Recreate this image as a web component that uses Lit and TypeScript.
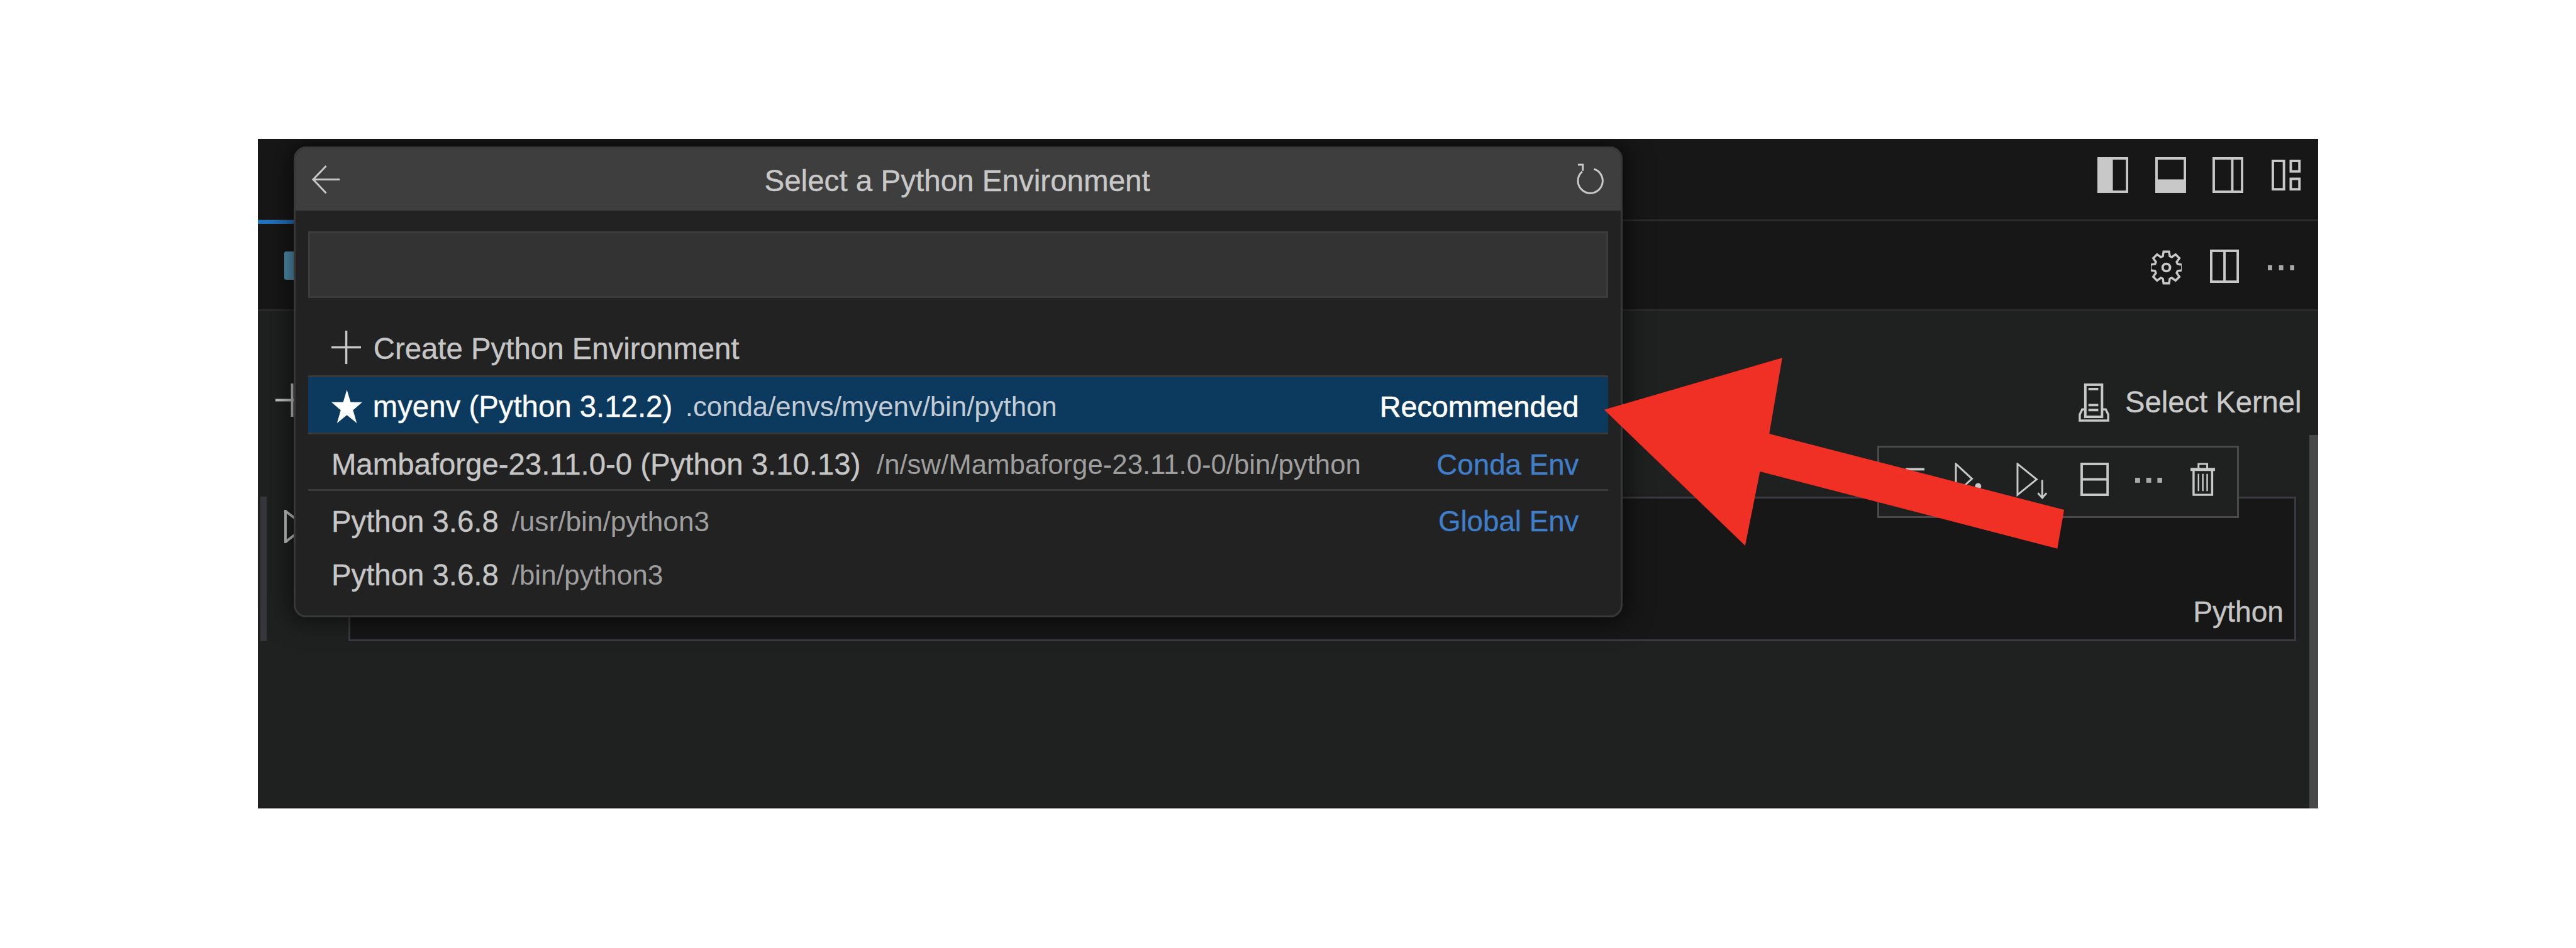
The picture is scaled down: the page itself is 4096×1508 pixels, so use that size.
import { LitElement, html, css, svg } from "lit";
import { customElement } from "lit/decorators.js";

const gearPath = (() => {
  const cx = 25, cy = 29, teeth = 8, ro = 26, ri = 19;
  const pts: string[] = [];
  for (let i = 0; i < teeth; i++) {
    const a = (i * 2 * Math.PI) / teeth - Math.PI / 2;
    const w = 0.17, v = 0.3;
    const p = (r: number, t: number) => `${(cx + r * Math.cos(t)).toFixed(1)} ${(cy + r * Math.sin(t)).toFixed(1)}`;
    pts.push(p(ri, a - v), p(ro, a - w), p(ro, a + w), p(ri, a + v));
  }
  return "M" + pts.join("L") + "Z";
})();

const ico = (w: number, h: number, body: unknown, cls = "") =>
  html`<svg class="ico ${cls}" width=${w} height=${h} viewBox="0 0 ${w} ${h}">${body}</svg>`;

@customElement("app-root")
export class AppRoot extends LitElement {
  static styles = css`
    :host { display: block; zoom: 0.98296; background: #fff; font-family: "Liberation Sans", Arial, sans-serif; }
    .page { position: relative; width: 4167px; height: 1534px; padding: 225px 417px 0; box-sizing: border-box; background: #fff; overflow: hidden; }
    .win { position: relative; width: 3333px; height: 1083px; display: flex; flex-direction: column; background: #1f2120; overflow: hidden; }
    .ico { display: block; flex: none; fill: none; stroke: #c8c8c8; stroke-width: 4; }
    .titlebar { height: 133px; border-bottom: 4px solid #2b2b2b; background: #171717; display: flex; justify-content: flex-end; align-items: flex-start; gap: 43px; padding: 29px 28px 0 0; box-sizing: border-box; flex: none; }
    .lay4 { margin-left: 3px; margin-top: 4px; }
    .tabbar { height: 146px; border-bottom: 4px solid #2b2b2b; background: #171717; display: flex; align-items: flex-start; flex: none; position: relative; padding: 46px 39px 0 0; box-sizing: border-box; }
    .tabline { position: absolute; left: 0; top: -2px; width: 200px; height: 6px; background: #1f74c4; }
    .tabicon { width: 40px; height: 46px; margin-left: 43px; margin-top: 3px; background: #4f94b5; border-radius: 3px; flex: none; }
    .tabtools { margin-left: auto; display: flex; gap: 46px; align-items: flex-start; }
    .dots3 { margin-top: 25px; stroke: none; fill: #a8a8a8; }
    .content { position: relative; flex: 1; display: flex; flex-direction: column; }
    .kernelbar { height: 300px; box-sizing: border-box; padding: 117px 27px 0 29px; display: flex; align-items: flex-start; flex: none; }
    .kernel { margin-left: auto; display: flex; align-items: center; gap: 25px; color: #cacaca; font-size: 48px; line-height: 62px; -webkit-text-stroke: 0.4px #cacaca; }
    .cellrow { display: flex; align-items: flex-start; padding-left: 4px; padding-right: 36px; }
    .cellbar { width: 10px; height: 234px; background: #36363c; flex: none; }
    .play { margin: 21px 0 0 29px; }
    .editor { margin-left: auto; width: 3150px; height: 234px; box-sizing: border-box; border: 4px solid #3a3a40; background: #171717; display: flex; align-items: flex-end; justify-content: flex-end; padding: 0 17px 14px 0; color: #c4c4c4; font-size: 47px; line-height: 62px; -webkit-text-stroke: 0.4px #c4c4c4; }
    .scroll { position: absolute; right: 0; top: 200px; bottom: 0; width: 14px; background: #484848; }
    .toolbar { position: absolute; left: 2620px; top: 217px; width: 585px; height: 117px; box-sizing: border-box; border: 4px solid #4a4a4a; background: #1f2120; display: flex; align-items: flex-start; gap: 49px; padding: 25px 0 0 42px; }
    .tb-dash { margin-top: 8px; }
    .tb-dots { margin-left: -6px; margin-top: 24px; stroke: none; fill: #a8a8a8; }
    .tb-trash { margin-left: -4px; }
    .modal { position: absolute; left: 58px; top: 12px; width: 2150px; height: 762px; box-sizing: border-box; background: #222; border: 4px solid #383838; border-radius: 20px; box-shadow: 0 0 40px 8px rgba(0,0,0,.55); overflow: hidden; z-index: 2; display: flex; flex-direction: column; }
    .mhead { height: 101px; box-sizing: border-box; background: #3e3e3e; display: flex; align-items: center; padding: 2px 28px 0 26px; color: #c8c8c8; font-size: 48.4px; flex: none; position: relative; -webkit-text-stroke: 0.4px #c8c8c8; }
    .mhead .ico { margin-top: -2px; }
    .mtitle { flex: 1; text-align: center; padding-right: 1px; padding-top: 2px; }
    .mbody { padding: 33px 21px 0 20px; flex: 1; display: flex; flex-direction: column; }
    .input { height: 108px; box-sizing: border-box; background: #333; border: 4px solid #3c3c3c; flex: none; }
    .row { display: flex; align-items: center; padding: 0 47px 0 38px; color: #c6c6c6; font-size: 48.2px; line-height: 62px; white-space: nowrap; box-sizing: border-box; flex: none; -webkit-text-stroke: 0.4px #c6c6c6; }
    .row .name { margin-right: 26px; }
    .row .short { margin-right: 21px; }
    .row .path { font-size: 45px; color: #9e9e9e; -webkit-text-stroke: 0; }
    .row .tag { margin-left: auto; color: #3f7fca; font-size: 46.5px; -webkit-text-stroke: 0.4px #3f7fca; }
    .create { height: 125px; padding-top: 42px; }
    .create .ico { margin-right: 20px; margin-top: -6px; }
    .sel { height: 96px; border-top: 4px solid #3a3a3a; border-bottom: 4px solid #3a3a3a; background: #0c3a5e; color: #fff; padding-top: 8px; -webkit-text-stroke: 0.4px #fff; }
    .sel .ico { margin-right: 17px; stroke: none; fill: #fff; margin-top: -2px; }
    .sel .path { color: #c3ccd4; font-size: 44.5px; }
    .sel .tag { color: #fff; font-size: 47.5px; -webkit-text-stroke: 0.7px #fff; }
    .conda { height: 88px; padding-top: 10px; }
    .conda .path { font-size: 44.5px; }
    .conda .tag { margin-top: 2px; }
    .sep { height: 4px; background: #3a3a3a; flex: none; }
    .glob { height: 92px; padding-top: 8px; }
    .last { height: 88px; padding-top: 0; }
    .arrow { position: absolute; left: 0; top: 0; z-index: 5; display: block; }
  `;

  render() {
    return html`<div class="page">
      <div class="win">
        <div class="titlebar">
          ${ico(50, 58, svg`<rect x="2" y="2" width="46" height="54"/><rect x="2" y="2" width="21" height="54" fill="#c8c8c8"/>`)}
          ${ico(50, 58, svg`<rect x="2" y="2" width="46" height="54"/><rect x="2" y="38" width="46" height="18" fill="#c8c8c8"/>`)}
          ${ico(50, 58, svg`<rect x="2" y="2" width="46" height="54"/><path d="M32 2V56"/>`)}
          ${ico(47, 50, svg`<rect x="2" y="2" width="18" height="46"/><rect x="31" y="2" width="14" height="17"/><rect x="31" y="31" width="14" height="17"/>`, "lay4")}
        </div>
        <div class="tabbar">
          <div class="tabline"></div>
          <div class="tabicon"></div>
          <div class="tabtools">
            ${ico(50, 58, svg`<path d=${gearPath} stroke-width="3.5"/><circle cx="25" cy="29" r="6" stroke-width="4"/>`)}
            ${ico(47, 54, svg`<rect x="2" y="2" width="43" height="50"/><path d="M23.5 2V52"/>`)}
            ${ico(43, 8, svg`<rect width="7" height="8"/><rect x="18" width="7" height="8"/><rect x="36" width="7" height="8"/>`, "dots3")}
          </div>
        </div>
        <div class="content">
          <div class="kernelbar">
            ${ico(54, 54, svg`<path d="M27 0V54M0 27H54"/>`)}
            <div class="kernel">
              ${ico(50, 62, svg`<rect x="11" y="2" width="27" height="52"/><path d="M16 9H32M16 35H32M16 43H32" stroke-width="4"/><path d="M11 42H6L2 50V60H48V50L44 42H38" stroke-width="3.5"/>`)}
              <span>Select Kernel</span>
            </div>
          </div>
          <div class="cellrow">
            <div class="cellbar"></div>
            ${ico(40, 54, svg`<path d="M2 2V52L34 27Z"/>`, "play")}
            <div class="editor">Python</div>
          </div>
          <div class="scroll"></div>
          <div class="toolbar">
            ${ico(31, 5, svg`<path d="M0 2.5H31"/>`, "tb-dash")}
            ${ico(51, 54, svg`<path d="M2 2V50L28 26Z" stroke-width="3"/><circle cx="38" cy="38" r="5" fill="#c8c8c8" stroke="none"/>`)}
            ${ico(54, 60, svg`<path d="M2 2V52L33 27Z" stroke-width="3"/><path d="M42 28V56M35 49L42 57L49 49" stroke-width="3"/>`)}
            ${ico(46, 54, svg`<rect x="2" y="2" width="42" height="50"/><path d="M2 27H44"/>`)}
            ${ico(44, 8, svg`<rect width="8" height="8"/><rect x="18" width="8" height="8"/><rect x="36" width="8" height="8"/>`, "tb-dots")}
            ${ico(40, 54, svg`<path d="M0 11H40" stroke-width="5"/><path d="M13 10V2H27V10" stroke-width="3"/><path d="M5 11V52H35V11" stroke-width="3.5"/><path d="M13 18V46M20 18V46M27 18V46" stroke-width="2.5"/>`, "tb-trash")}
          </div>
        </div>
        <div class="modal">
          <div class="mhead">
            ${ico(46, 48, svg`<path d="M46 24H3M24 2L3 24L24 46" stroke-width="3"/>`)}
            <div class="mtitle">Select a Python Environment</div>
            ${ico(46, 52, svg`<path d="M30 9A20 20 0 1 1 11 13" stroke-width="3"/><path d="M4 2H12V12" stroke-width="3"/>`)}
          </div>
          <div class="mbody">
            <div class="input"></div>
            <div class="row create">
              ${ico(48, 54, svg`<path d="M24 0V54M0 27H48" stroke-width="3.5"/>`)}
              <span>Create Python Environment</span>
            </div>
            <div class="row sel">
              ${ico(50, 54, svg`<polygon points="25,0 31,20 50,20 35,33 41,54 25,41 9,54 15,33 0,20 19,20"/>`)}
              <span class="name short">myenv (Python 3.12.2)</span>
              <span class="path">.conda/envs/myenv/bin/python</span>
              <span class="tag">Recommended</span>
            </div>
            <div class="row conda">
              <span class="name">Mambaforge-23.11.0-0 (Python 3.10.13)</span>
              <span class="path">/n/sw/Mambaforge-23.11.0-0/bin/python</span>
              <span class="tag">Conda Env</span>
            </div>
            <div class="sep"></div>
            <div class="row glob">
              <span class="name short">Python 3.6.8</span>
              <span class="path">/usr/bin/python3</span>
              <span class="tag">Global Env</span>
            </div>
            <div class="row last">
              <span class="name short">Python 3.6.8</span>
              <span class="path">/bin/python3</span>
            </div>
          </div>
        </div>
      </div>
      <svg class="arrow" width="4167" height="1534" viewBox="0 0 4167 1534">
        <polygon fill="#f03024" points="2595,663 2883,579 2862,702 3339,825 3328,888 2847,763 2823,883"/>
      </svg>
    </div>`;
  }
}
